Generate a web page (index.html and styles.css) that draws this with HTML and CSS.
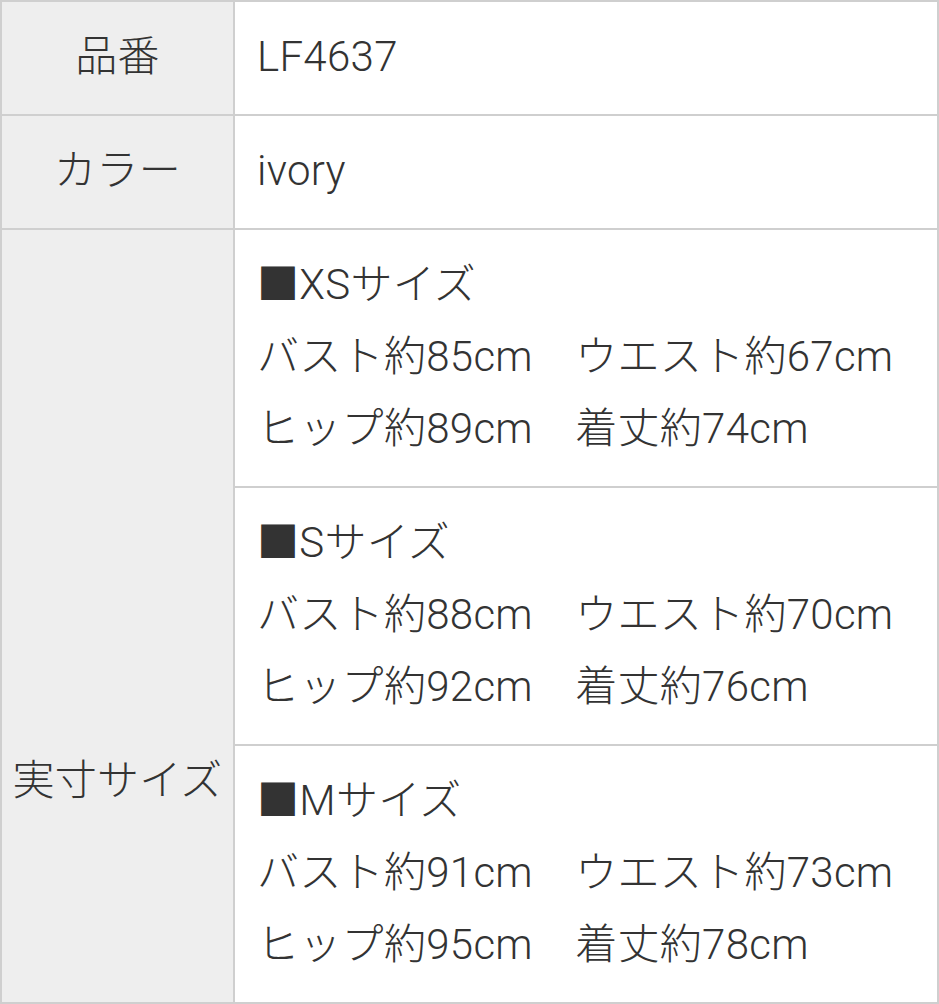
FILE: index.html
```html
<!DOCTYPE html>
<html lang="ja">
<head>
<meta charset="utf-8">
<link rel="stylesheet" href="styles.css">
</head>
<body>
<div class="spec">
  <div class="label">品番</div>
  <div class="value">LF4637</div>
  <div class="label">カラー</div>
  <div class="value">ivory</div>
  <div class="label label-size">実寸サイズ</div>
  <div class="value value-sizes">
    <div class="size">■XSサイズ<br>バスト約85cm　ウエスト約67cm<br>ヒップ約89cm　着丈約74cm</div>
    <div class="size">■Sサイズ<br>バスト約88cm　ウエスト約70cm<br>ヒップ約92cm　着丈約76cm</div>
    <div class="size">■Mサイズ<br>バスト約91cm　ウエスト約73cm<br>ヒップ約95cm　着丈約78cm</div>
  </div>
</div>
</body>
</html>
```

FILE: styles.css
```css
html, body {
  margin: 0;
  padding: 0;
  background: #ffffff;
}
body {
  font-family: Roboto, "Noto Sans CJK JP", "Noto Sans", sans-serif;
  font-weight: 300;
  font-size: 42px;
  line-height: 72px;
  color: #333333;
  letter-spacing: 0.3px;
}
.spec {
  display: grid;
  grid-template-columns: 233px 1fr;
  width: 939px;
  box-sizing: border-box;
  border-top: 2px solid #cfcfcf;
  border-left: 2px solid #cfcfcf;
  border-right: 2px solid #cfcfcf;
}
.label {
  background: #eeeeee;
  border-right: 2px solid #cfcfcf;
  border-bottom: 2px solid #cfcfcf;
  text-align: center;
  padding: 19px 0 21px;
  box-sizing: border-box;
  white-space: nowrap;
}
.label-size {
  padding-top: 515px;
}
.value {
  border-bottom: 2px solid #cfcfcf;
  padding: 19px 22px 21px;
  white-space: nowrap;
}
.value-sizes {
  padding: 0;
  border-bottom: none;
}
.size {
  padding: 19px 22px 21px;
  border-bottom: 2px solid #cfcfcf;
}
```
